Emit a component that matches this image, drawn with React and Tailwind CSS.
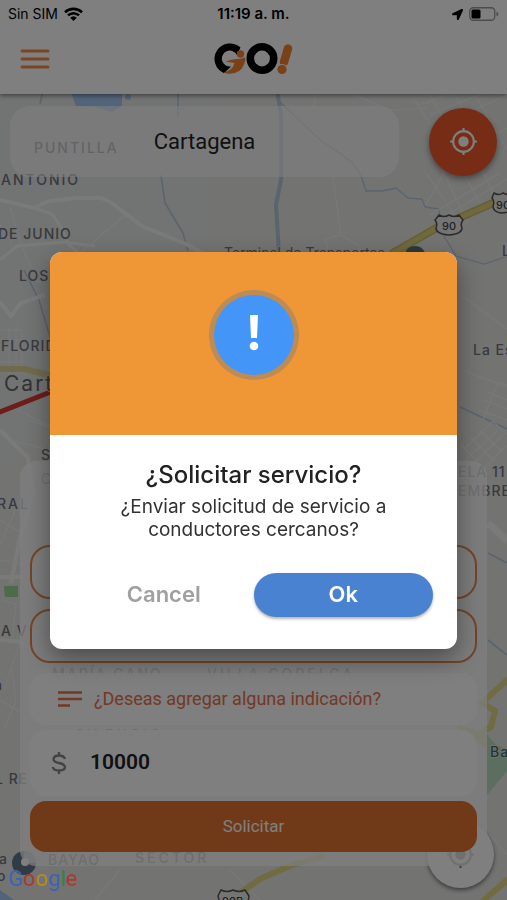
import { FaLocationArrow } from 'react-icons/fa';

function CityMap() {
  return (
    <svg
      className="absolute inset-0 h-full w-full bg-[#e7e6e5]"
      viewBox="0 0 507 900"
      preserveAspectRatio="xMidYMin slice"
      aria-hidden="true"
    >
      <path d="M0 95h210v220L60 420 0 470z" fill="#e3e6ea" opacity=".5" />
      <path d="M70 90H122V106L112 112 95 107 76 106z" fill="#a5c8f4" />
      <circle cx="128" cy="97" r="3" fill="#a5c8f4" />
      <g fill="none" stroke="#b4c8dc" strokeWidth="1.6">
        <path d="M43 90l-3 14M178 92v25M161 175l4 28 18 30 5 18" />
        <path d="M277 90l4 25v65l-5 25 3 48" strokeWidth="4" />
        <path d="M278 100l40 38 35 25 9 15 4 13h16l14 -3 12 10 14 1 3 8 14 2 3 24 14 23 28 8 24-8 13-25" strokeWidth="1.3" />
        <path d="M24 270l15 30 12 40M460 407l47 22M488 553l19 10M488 640l19 15" />
      </g>
      <g fill="none" stroke="#f4f4f4" strokeWidth="4">
        <path d="M0 200l34 8 15-7 28-3h24l9 4 32 24 44 18 20 11" />
        <path d="M34 208l18 6 9 13 8 18 12 10M0 260l17-14 48-4 30 4" strokeWidth="3" />
        <path d="M0 302l11 14 10-13 24-8M0 430l28 28 5 35-12 40-10 50M0 577h24M0 640l24 2" strokeWidth="4" />
        <path d="M488 523l19 18" strokeWidth="7" />
      </g>
      <g fill="none" stroke="#f1f1f1" strokeWidth="1.2">
        <path d="M0 225l12 18M125 215l-45 38M10 207l12 40M23 248l15 34 20-4M2 330h20v42H2M9 327v48M16 327v48M0 340h22M0 350h22M0 362h22M333 177l8 58-16 4 4 14M341 235l17 10 2 10M316 95l-3 14M355 95l35 15 38-2M426 205l25-45 56-32M430 215l70-42M437 221l70-42M445 229l60-36M424 170l38 56M440 165l28 58M456 160l28 50M472 150l22 45M415 100l15 25M430 95l20 35M455 95l25 45M475 95l32 55M420 105l45-18M430 115l60-25M440 125l67-30M461 295l46 34M461 370l46 17M483 420l15-38 9 3M479 410l28 10M483 400l24 9M487 392l20 8M463 450l30-29 14 14M466 460l32-30M475 462l28-27M482 470l25-25M461 445l25 25M470 437l25 25M480 430l22 22M2 600l14 4-4 36M20 500L0 545M0 560l24 4M12 500l12 20M0 520l20 12M15 540l9 5M0 700l20 12M12 670l4 30-12 30M20 642L4 690M30 420l30 12M18 410l35 18M10 440l40 10M120 870l-25 30M230 870l30 30M490 835l17 20" />
      </g>
      <g fill="none" strokeLinecap="round">
        <path d="M393 253l45-26 69-30" stroke="#c9bd65" strokeWidth="8" />
        <path d="M393 253l45-26 69-30" stroke="#dfd37a" strokeWidth="5" />
        <path d="M0 369h25l24 6" stroke="#e0d49b" strokeWidth="6" />
        <path d="M507 680l-25 23 13 8-4 16-20 10 36 16M460 728l25 8" stroke="#e0d683" strokeWidth="6" />
        <path d="M240 893l20-14 32-14 30-8M484 900l23-20" stroke="#e0d683" strokeWidth="6" />
        <path d="M0 412l48-19" stroke="#dd3a36" strokeWidth="5" />
      </g>
      <path d="M4 586h14v11H5z" fill="#9bd595" />
      <path d="M487 735l20 22v14l-20 24z" fill="#b8dcc0" />
      <path d="M0 890l14 10H0z" fill="#a5c8f4" />
      <circle cx="415" cy="257" r="11" fill="#55737a" />
      <g>
        <circle cx="24" cy="863" r="12" fill="#60778a" />
        <path d="M24 851a12 12 0 0 1 12 12H24z" fill="#a5bccb" />
        <circle cx="25" cy="862" r="4" fill="#fff" />
      </g>
      <g fill="#e9e9e9" stroke="#555" strokeWidth="1.5">
        <path d="M439 215q5 3 10 0 5 3 10 0l4 5q-3 4-1 8 0 6-13 7-13-1-13-7 2-4-1-8z" />
        <path d="M494 193q5 3 9 0 5 3 9 0l4 5q-3 4-1 8 0 6-14 7-8-1-8-7 2-4-1-8z" />
        <path d="M221 890q6 3 12 0 6 3 12 0l4 6-2 12h-26l-3-12z" />
      </g>
      <g fill="#444" fontFamily="Inter, 'Liberation Sans', sans-serif" fontSize="11" fontWeight="500">
        <text x="442" y="230">90</text>
        <text x="496" y="209">90</text>
        <text x="222" y="905">90B</text>
      </g>
      <g
        fill="#6f747c"
        stroke="#e7e7e7"
        strokeWidth="1.5"
        paintOrder="stroke"
        fontFamily="Inter, 'Liberation Sans', sans-serif"
        fontSize="14"
        fontWeight="500"
        letterSpacing="1"
      >
        <text x="34" y="153" letterSpacing="2">PUNTILLA</text>
        <text x="1" y="185" letterSpacing="2">ANTONIO</text>
        <text x="-2" y="239">DE JUNIO</text>
        <text x="19" y="281">LOS</text>
        <text x="1" y="351">FLORIDA</text>
        <text x="4" y="391" fontSize="21" fontWeight="400" letterSpacing="2" fill="#666">Cartagena</text>
        <text x="224" y="258" letterSpacing="0" fontWeight="400">Terminal de Transportes</text>
        <text x="502" y="256">La</text>
        <text x="473" y="355">La Esperanza</text>
        <text x="41" y="460">S</text>
        <text x="41" y="484" fontWeight="400">C</text>
        <text x="-3" y="509" letterSpacing="2">RAL</text>
        <text x="458" y="477">ELA 11</text>
        <text x="458" y="496">EMBRE</text>
        <text x="1" y="636">A V</text>
        <text x="-6" y="690">a</text>
        <text x="52" y="679" letterSpacing="2">MARÍA CANO</text>
        <text x="207" y="679" letterSpacing="3">VILLA CORELCA</text>
        <text x="75" y="740" letterSpacing="3">SILENCIO</text>
        <text x="-5" y="784">L RE</text>
        <text x="490" y="757" fill="#3f6d66">Ba</text>
        <text x="-1" y="864">a</text>
        <text x="-3" y="881">o</text>
        <text x="48" y="865">BAYAO</text>
        <text x="135" y="863" letterSpacing="3">SECTOR</text>
      </g>
    </svg>
  );
}

function Crosshair({ className }) {
  return (
    <svg className={className} viewBox="0 0 26 26" fill="none" stroke="currentColor" strokeWidth="2" aria-hidden="true">
      <circle cx="13" cy="13" r="10" />
      <circle cx="13" cy="13" r="5" fill="currentColor" stroke="none" />
      <path d="M13 0v4M13 22v4M0 13h4M22 13h4" />
    </svg>
  );
}

function GoLogo() {
  return (
    <svg className="h-[34px] w-20" viewBox="0 0 80 34" role="img" aria-label="GO!">
      <path d="M27.500 5.500A15.500 15.500 0 1 0 11 31.200L18 24.500A8 8 0 1 1 24 13z" fill="#000" />
      <circle cx="27.500" cy="12" r="3.700" fill="#f58230" />
      <path d="M12.500 19.500q7-3 13-2.500 4-.5 5.500-1.500 1.500 0 1.200 3-2 10-10.200 12.500-6 1.800-11.500-.5 9-1.500 11-9.500z" fill="#f58230" />
      <circle cx="49" cy="16.500" r="11.700" fill="none" stroke="#000" strokeWidth="7.600" />
      <path d="M75 6.500L71 20" stroke="#f58230" strokeWidth="8.500" strokeLinecap="round" />
      <circle cx="69" cy="27.500" r="5.500" fill="#fff" />
      <circle cx="69" cy="27.500" r="4.600" fill="#f58230" />
    </svg>
  );
}

function Header() {
  return (
    <header className="relative bg-white pb-4 shadow-[0_2px_4px_rgba(0,0,0,0.4)]">
      <div className="grid h-7 grid-cols-3 items-center px-2 font-['Inter','Liberation_Sans',sans-serif] text-sm text-black">
        <div className="flex items-center gap-[6px]">
          <span>Sin SIM</span>
          <svg className="h-[14px] w-[19px]" viewBox="0 0 19 14" fill="none" stroke="currentColor" strokeWidth="2.600" aria-hidden="true">
            <path d="M1 5.200a12.500 12.500 0 0 1 17 0M4 8.400a8 8 0 0 1 11 0" />
            <path d="M9.500 14L6.200 10.700a4.800 4.800 0 0 1 6.600 0z" fill="currentColor" stroke="none" />
          </svg>
        </div>
        <span className="text-center text-[15px] font-semibold whitespace-nowrap">11:19 a. m.</span>
        <div className="flex items-center justify-end gap-[6px]">
          <FaLocationArrow className="h-[11px] w-[11px]" />
          <svg className="h-[14px] w-[30px]" viewBox="0 0 30 14" aria-hidden="true">
            <rect x=".75" y=".75" width="25" height="12.500" rx="3.500" fill="none" stroke="#999" strokeWidth="1.300" />
            <rect x="2.500" y="2.500" width="9" height="9" rx="1.500" fill="#000" />
            <path d="M27.500 4.500q2 1 2 2.500t-2 2.500z" fill="#999" />
          </svg>
        </div>
      </div>
      <div className="grid h-[50px] grid-cols-3 items-center px-5 pt-3">
        <button type="button" aria-label="Menú" className="w-[30px]">
          <svg className="h-[22px] w-[30px]" viewBox="0 0 30 22" stroke="#f58b48" strokeWidth="3" strokeLinecap="round" aria-hidden="true">
            <path d="M2 3h26M2 11h26M2 19h26" />
          </svg>
        </button>
        <div className="flex justify-center">
          <GoLogo />
        </div>
      </div>
    </header>
  );
}

function RequestPanel() {
  return (
    <form className="relative mx-5 rounded-2xl bg-white/75 px-[10px] pt-[84px] pb-[14px]">
      <div className="flex flex-col gap-[10px]">
        <input aria-label="Origen" className="h-[54px] w-full rounded-[20px] border-2 border-[#e58a50] bg-white/40 px-4" />
        <input aria-label="Destino" className="h-[54px] w-full rounded-[20px] border-2 border-[#e58a50] bg-white/40 px-4" />
        <button type="button" className="flex h-[52px] w-full items-center gap-3 rounded-2xl bg-white/90 px-7 text-lg text-[#e8704c]">
          <svg className="h-4 w-6" viewBox="0 0 24 16" stroke="currentColor" strokeWidth="2.400" aria-hidden="true">
            <path d="M0 1.500h24M0 8h24M0 14.500h12" />
          </svg>
          ¿Deseas agregar alguna indicación?
        </button>
      </div>
      <label className="mt-[5px] flex h-[66px] items-center gap-[22px] rounded-2xl bg-white/90 px-5">
        <svg className="h-6 w-[18px] shrink-0 text-[#858585]" viewBox="0 0 18 24" fill="none" stroke="currentColor" strokeWidth="2.300" aria-label="Valor">
          <path d="M9 1v4M9 19v4M15 8q-1-3.500-6-3.500T3.500 8q0 3 5.500 4t6 4q0 3.500-6 3.500T3 16" />
        </svg>
        <input defaultValue="10000" className="w-full bg-transparent text-[21px] font-semibold text-[#222]" />
      </label>
      <button type="submit" className="mt-[5px] h-[51px] w-full rounded-2xl bg-[#e07430] text-[17px] text-white">
        Solicitar
      </button>
    </form>
  );
}

function GoogleMark() {
  return (
    <div className="absolute bottom-2 left-2 z-20 font-['Roboto','Liberation_Sans',sans-serif] text-[22px] leading-[26px]">
      <span className="text-[#3d63b3]">G</span>
      <span className="text-[#ad392f]">o</span>
      <span className="text-[#b38b20]">o</span>
      <span className="text-[#3d63b3]">g</span>
      <span className="text-[#397e47]">l</span>
      <span className="text-[#ad392f]">e</span>
    </div>
  );
}

function ConfirmDialog() {
  return (
    <div className="fixed inset-0 z-30 flex items-center px-[50px]">
      <section
        role="dialog"
        aria-modal="true"
        aria-labelledby="dialog-title"
        className="w-full overflow-hidden rounded-xl bg-white font-['Inter','Liberation_Sans',sans-serif] shadow-[0_10px_24px_rgba(0,0,0,0.4)]"
      >
        <div className="flex h-[183px] items-center justify-center bg-[#ef9636] pb-4">
          <div className="flex h-[90px] w-[90px] items-center justify-center rounded-full bg-[#be8b54]">
            <div className="flex h-20 w-20 items-center justify-center rounded-full bg-[#4395f7]">
              <svg className="mb-1 h-9 w-3" viewBox="0 0 12 36" fill="#fff" aria-hidden="true">
                <path d="M2 0h8L9 23H3z" />
                <circle cx="6" cy="31" r="4.300" />
              </svg>
            </div>
          </div>
        </div>
        <div className="px-6 pt-6 pb-8 text-center text-[#333]">
          <h2 id="dialog-title" className="text-2xl leading-8 font-medium text-[#222]">¿Solicitar servicio?</h2>
          <p className="mx-auto mt-1 max-w-[300px] text-[19px] leading-[23px]">¿Enviar solicitud de servicio a conductores cercanos?</p>
          <div className="mt-8 grid grid-cols-2">
            <button type="button" className="h-11 text-[22px] font-semibold text-[#a0a0a0]">Cancel</button>
            <button type="button" className="h-11 rounded-full bg-[#4882d0] text-[22px] font-semibold text-white shadow-[0_2px_3px_rgba(0,0,0,0.3)]">Ok</button>
          </div>
        </div>
      </section>
    </div>
  );
}

export default function App() {
  return (
    <div className="relative flex min-h-screen flex-col overflow-hidden font-['Roboto','Liberation_Sans',sans-serif]">
      <CityMap />
      <Header />
      <main className="relative flex flex-1 flex-col justify-between pt-3 pb-[34px]">
        <div className="flex items-center gap-[30px] px-[10px]">
          <input
            aria-label="Ciudad"
            defaultValue="Cartagena"
            className="h-[71px] min-w-0 flex-1 rounded-[20px] bg-white/60 text-center text-[22px] text-[#222]"
          />
          <button type="button" aria-label="Mi ubicación" className="flex h-[68px] w-[68px] items-center justify-center rounded-full bg-[#ef5a2b] text-white shadow-[0_3px_6px_rgba(0,0,0,0.4)]">
            <Crosshair className="h-[27px] w-[27px]" />
          </button>
        </div>
        <button type="button" aria-label="Centrar mapa" className="absolute right-[13px] bottom-3 flex h-[67px] w-[67px] items-center justify-center rounded-full bg-white text-[#888] shadow-[0_2px_4px_rgba(0,0,0,0.5)]">
          <Crosshair className="h-[27px] w-[27px]" />
        </button>
        <RequestPanel />
      </main>
      <div className="absolute inset-0 z-10 bg-black/50" />
      <GoogleMark />
      <ConfirmDialog />
    </div>
  );
}
